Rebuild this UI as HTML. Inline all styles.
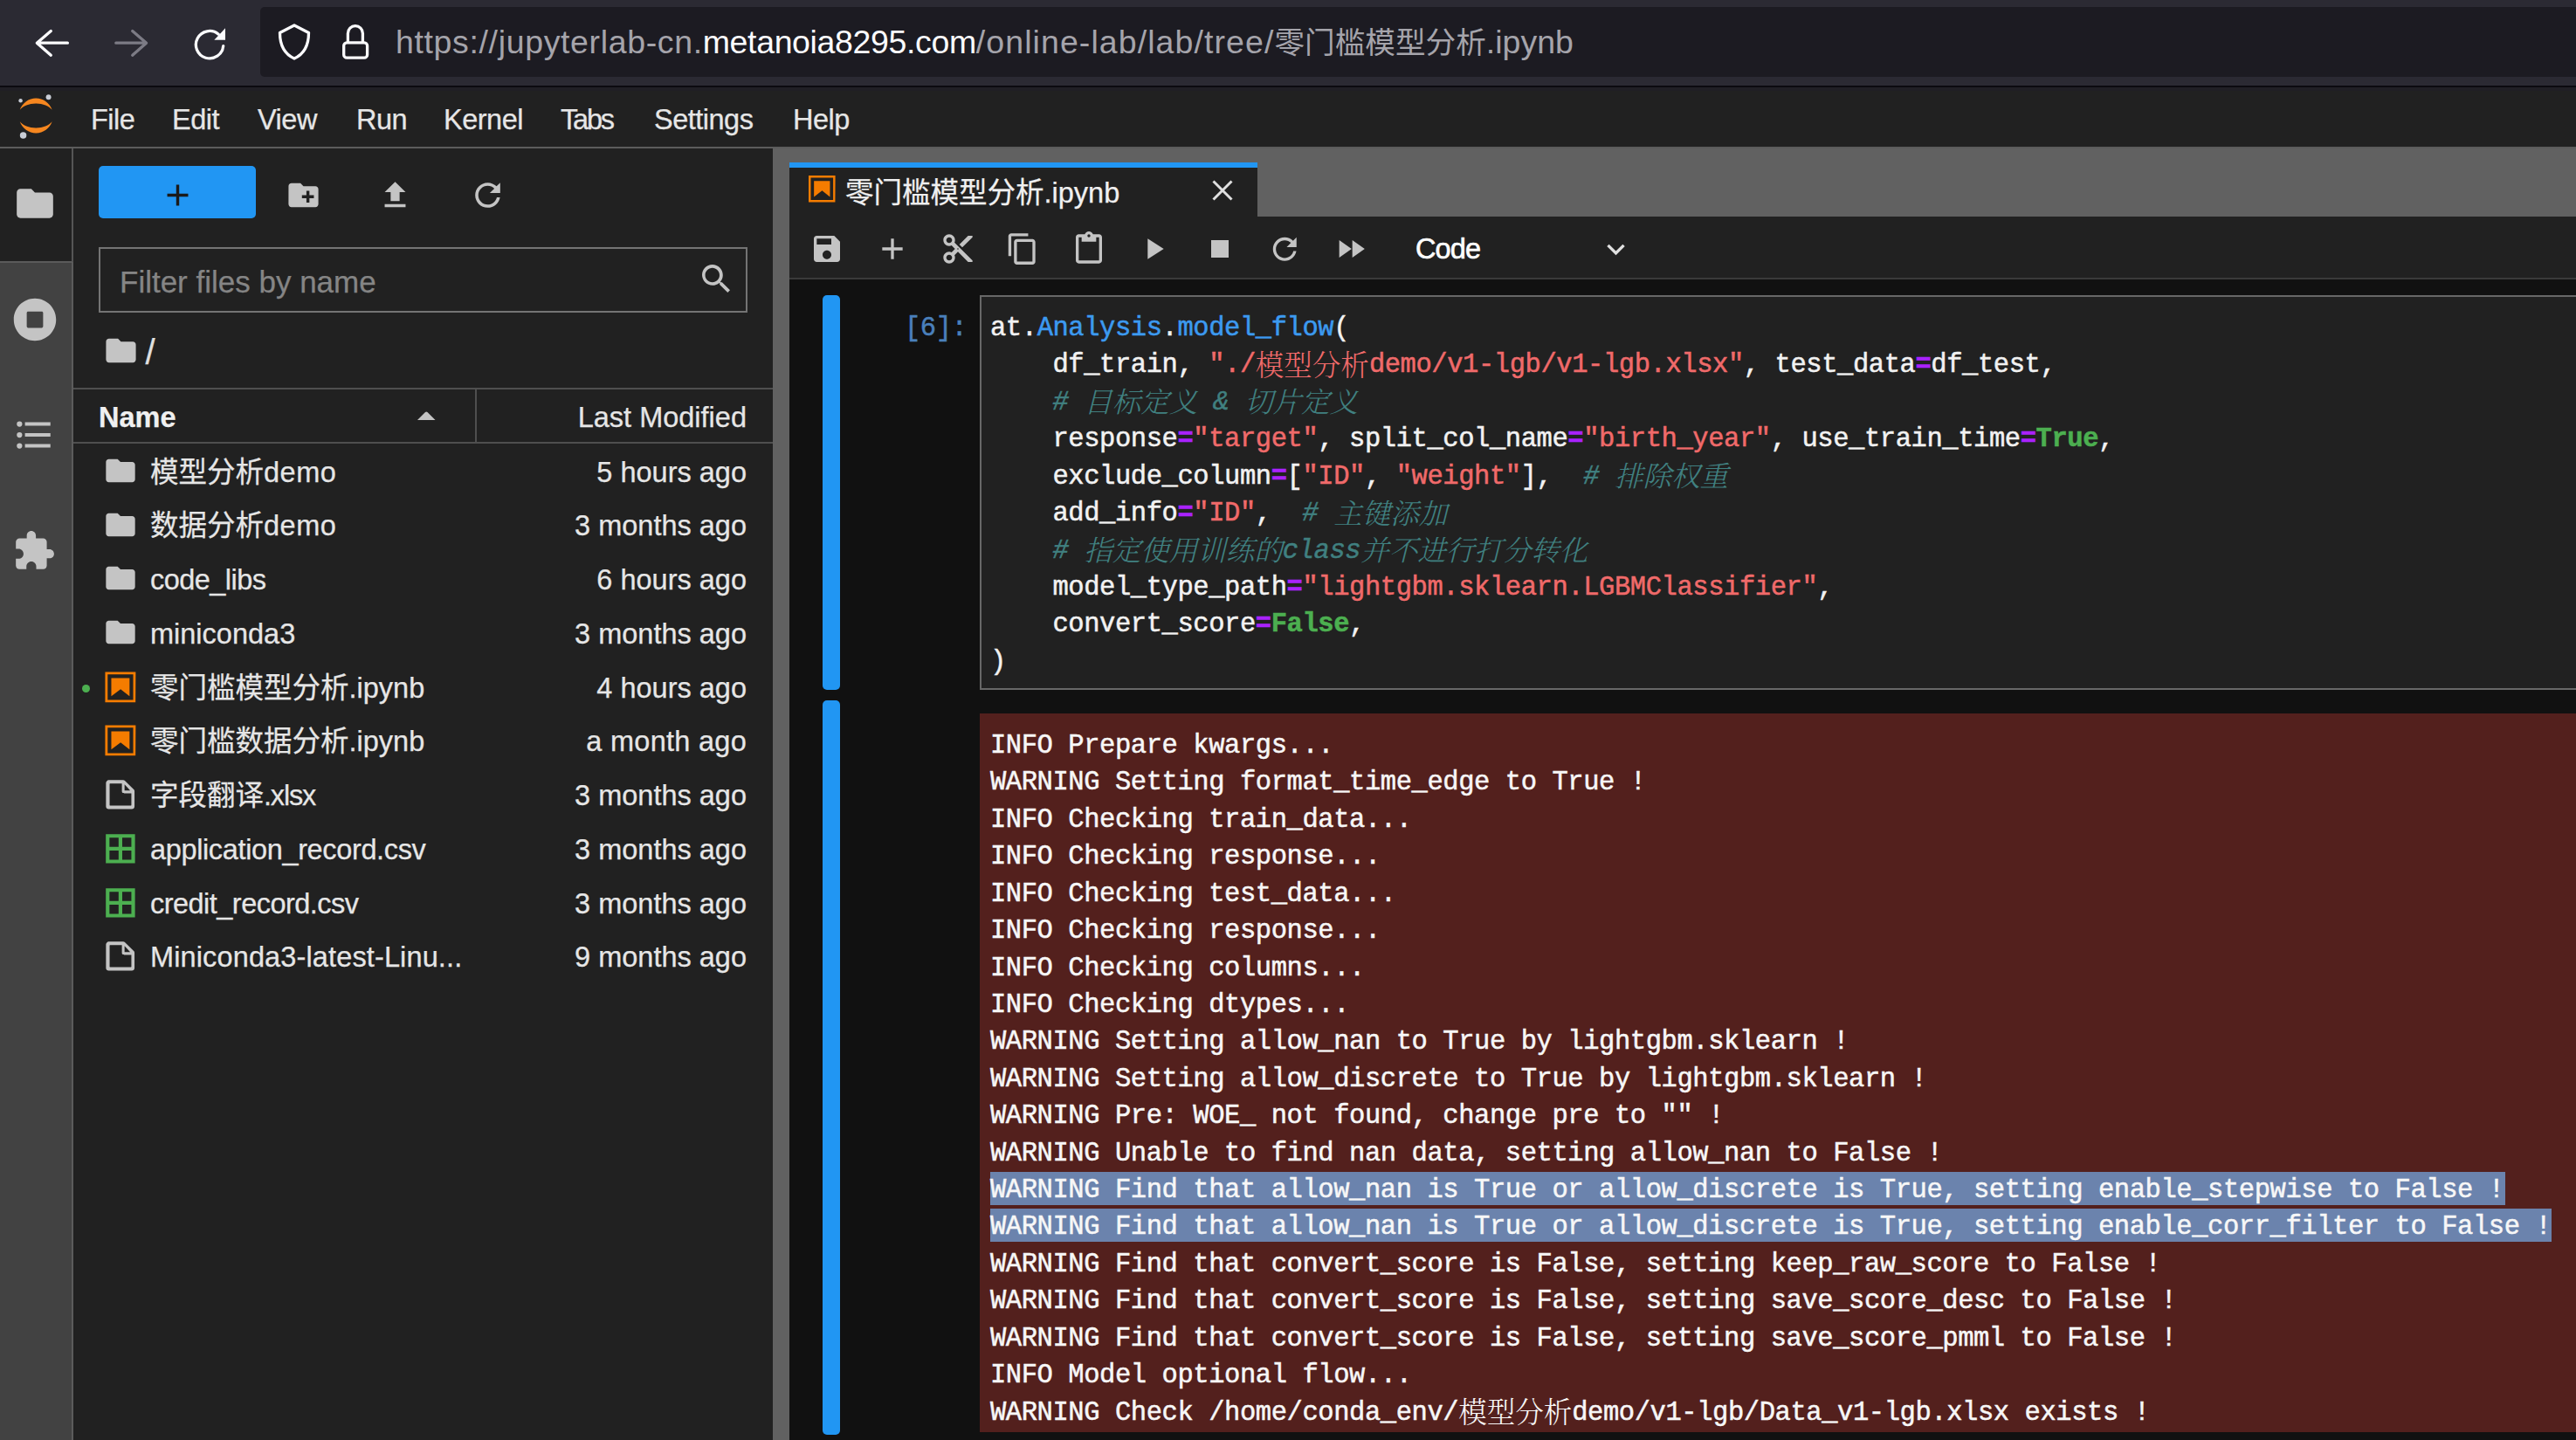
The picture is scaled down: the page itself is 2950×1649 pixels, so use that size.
<!DOCTYPE html>
<html lang="zh">
<head>
<meta charset="utf-8">
<title>JupyterLab</title>
<style>
*{box-sizing:border-box;margin:0;padding:0}
html,body{width:2950px;height:1649px;overflow:hidden;background:#111111}
body{position:relative;-webkit-text-stroke:0.25px currentColor;font-family:"Liberation Sans","Noto Sans CJK SC",sans-serif;color:#e0e0e0;font-size:32px}
.abs{position:absolute}
svg{display:block;position:absolute}
/* browser chrome */
#chrome{left:0;top:0;width:2950px;height:98px;background:#2b2a33}
#urlbar{left:298px;top:8px;width:2700px;height:80px;background:#1c1b22;border-radius:5px}
#url{left:453px;top:24.5px;font-size:37.5px;line-height:46px;color:#a5a4ab;white-space:nowrap;-webkit-text-stroke:0}
.uz{font-size:34.64px}
#url b{font-weight:400;color:#fbfbfe}
#chromeline{left:0;top:98px;width:2950px;height:2px;background:#0b0a10}
/* menu bar */
#menubar{left:0;top:100px;width:2950px;height:68px;background:#212121;border-top:4px solid #201f25}
#menuline{left:0;top:168px;width:2950px;height:2px;background:#5c5c5c}
.menu{top:115px;font-size:32.5px;line-height:44px;color:#e6e6e6;white-space:nowrap;letter-spacing:-0.5px}
/* left sidebar */
#sidebar{left:0;top:170px;width:82px;height:1479px;background:#424242}
#sideactive{left:0;top:170px;width:84px;height:130px;background:#212121}
#sideline{left:82px;top:300px;width:2px;height:1349px;background:#5c5c5c}
/* file browser */
#fb{left:84px;top:170px;width:801px;height:1479px;background:#212121}
#newbtn{left:113px;top:190px;width:180px;height:60px;background:#2196f3;border-radius:5px}
#filter{left:113px;top:283px;width:743px;height:75px;border:2.5px solid #747474;background:#212121}
#filtertxt{left:137px;top:300px;font-size:35px;line-height:46px;color:#858585;white-space:nowrap}
#crumb{left:166.5px;top:380.5px;font-size:40px;line-height:44px;color:#e0e0e0}
.hline{height:2px;background:#4f4f4f}
#hdrName{left:113px;top:455px;font-size:32.5px;line-height:46px;color:#f0f0f0;font-weight:700}
#hdrMod{right:2095px;top:455px;font-size:32.5px;line-height:46px;color:#e6e6e6;white-space:nowrap}
.row{left:84px;width:801px;height:62px}
.row .nm{position:absolute;left:88px;top:8px;font-size:32.5px;line-height:46px;color:#e6e6e6;white-space:nowrap}
.row .md{position:absolute;right:30px;top:8px;font-size:32.5px;line-height:46px;color:#e6e6e6;white-space:nowrap}
/* main */
#dock{left:885px;top:170px;width:2065px;height:1479px;background:#616161}
#tab{left:904px;top:186px;width:536px;height:62px;background:#212121;border-top:6px solid #2196f3}
#tabtxt{left:968px;top:198px;font-size:32.5px;line-height:46px;color:#f0f0f0;white-space:nowrap}
#toolbar{left:904px;top:248px;width:2046px;height:70px;background:#212121}
#toolline{left:904px;top:318px;width:2046px;height:2px;background:#3a3a3a}
#nb{left:904px;top:320px;width:2046px;height:1329px;background:#111111}
.coll{left:942px;width:20px;background:#2196f3;border-radius:5px}
#editor{left:1122px;top:338px;width:1900px;height:452px;background:#212121;border:2px solid #676767}
#output{left:1122px;top:817px;width:1900px;height:823px;background:#53201d}
pre{position:absolute;font-family:"Liberation Mono","Noto Serif CJK SC",monospace;font-size:30.5px;letter-spacing:-0.43px;line-height:42.42px;color:#f2f2f2;white-space:pre;-webkit-text-stroke:0.5px currentColor}
#prompt{left:1036px;top:355px;color:#4a80bb}
#code{left:1134px;top:355px}
#out{left:1134px;top:833px;color:#f7f7f7}
.z{font-size:32.5px;letter-spacing:0;line-height:0;-webkit-text-stroke:0;font-weight:300;position:relative;top:3.5px}
.selb{left:1134px;height:38px;background:#6b83ad}
.k{color:#3c9af0}.s{color:#f06a6a}.c{color:#408080;font-style:italic}.o{color:#aa22ff;font-weight:700}.b{color:#4caf50;font-weight:700}
#celltype{left:1621px;top:262px;font-size:32.5px;line-height:46px;color:#fff;letter-spacing:-0.9px;-webkit-text-stroke:0.6px #fff}
</style>
</head>
<body>
<!-- browser chrome -->
<div class="abs" id="chrome"></div>
<div class="abs" id="urlbar"></div>
<div class="abs" id="url"><span style="letter-spacing:0.64px">https://jupyterlab-cn.</span><b style="letter-spacing:-0.37px">metanoia8295.com</b><span style="letter-spacing:1.08px">/online-lab/lab/tree/</span><span class="uz">零门槛模型分析</span>.ipynb</div>
<div class="abs" id="chromeline"></div>
<!-- menu -->
<div class="abs" id="menubar"></div>
<div class="abs" id="menuline"></div>
<div class="abs menu" style="left:104px">File</div>
<div class="abs menu" style="left:197px">Edit</div>
<div class="abs menu" style="left:295px">View</div>
<div class="abs menu" style="left:408px">Run</div>
<div class="abs menu" style="left:508px">Kernel</div>
<div class="abs menu" style="left:642px;letter-spacing:-2.2px">Tabs</div>
<div class="abs menu" style="left:749px">Settings</div>
<div class="abs menu" style="left:908px">Help</div>
<!-- sidebar -->
<div class="abs" id="sidebar"></div>
<div class="abs" id="sideline"></div>
<div class="abs" id="sideactive"></div>
<div class="abs" style="left:82px;top:170px;width:2px;height:130px;background:#555"></div>
<div class="abs" style="left:0;top:299px;width:82px;height:2px;background:#5a5a5a"></div>
<!-- file browser -->
<div class="abs" id="fb"></div>
<div class="abs" id="newbtn"></div>
<div class="abs" id="filter"></div>
<div class="abs" id="filtertxt">Filter files by name</div>
<div class="abs" id="crumb">/</div>
<div class="abs hline" style="left:84px;top:444px;width:801px"></div>
<div class="abs hline" style="left:84px;top:506px;width:801px"></div>
<div class="abs" style="left:544px;top:446px;width:2px;height:60px;background:#4f4f4f"></div>
<div class="abs" id="hdrName">Name</div>
<div class="abs" id="hdrMod">Last Modified</div>
<div class="abs row" style="top:509.60px"><span class="nm">模型分析<span style="letter-spacing:0.5px">demo</span></span><span class="md">5 hours ago</span></div>
<div class="abs row" style="top:571.35px"><span class="nm">数据分析<span style="letter-spacing:0.5px">demo</span></span><span class="md">3 months ago</span></div>
<div class="abs row" style="top:633.10px"><span class="nm" style="letter-spacing:-0.55px">code_libs</span><span class="md">6 hours ago</span></div>
<div class="abs row" style="top:694.85px"><span class="nm">miniconda3</span><span class="md">3 months ago</span></div>
<div class="abs row" style="top:756.60px"><span class="nm">零门槛模型分析.ipynb</span><span class="md">4 hours ago</span></div>
<div class="abs row" style="top:818.35px"><span class="nm">零门槛数据分析.ipynb</span><span class="md" style="letter-spacing:0.27px">a month ago</span></div>
<div class="abs row" style="top:880.10px"><span class="nm">字段翻译<span style="letter-spacing:-1.2px">.xlsx</span></span><span class="md">3 months ago</span></div>
<div class="abs row" style="top:941.85px"><span class="nm" style="letter-spacing:-0.36px">application_record.csv</span><span class="md">3 months ago</span></div>
<div class="abs row" style="top:1003.60px"><span class="nm" style="letter-spacing:-0.53px">credit_record.csv</span><span class="md">3 months ago</span></div>
<div class="abs row" style="top:1065.35px"><span class="nm" style="letter-spacing:0.13px">Miniconda3-latest-Linu...</span><span class="md">9 months ago</span></div>
<!--ROWSEND-->
<!-- main -->
<div class="abs" id="dock"></div>
<div class="abs" id="tab"></div>
<div class="abs" id="tabtxt">零门槛模型分析.ipynb</div>
<div class="abs" id="toolbar"></div>
<div class="abs" id="toolline"></div>
<div class="abs" id="nb"></div>
<div class="abs coll" style="top:338px;height:452px"></div>
<div class="abs coll" style="top:802px;height:841px"></div>
<div class="abs" id="editor"></div>
<div class="abs" id="output"></div>
<div class="abs selb" style="top:1341.8px;width:1734.5px"></div>
<div class="abs selb" style="top:1384.2px;width:1788px"></div>
<pre id="prompt">[6]:</pre>
<pre id="code">at.<span class="k">Analysis</span>.<span class="k">model_flow</span>(
    df_train, <span class="s">"./<span class="z">模型分析</span>demo/v1-lgb/v1-lgb.xlsx"</span>, test_data<span class="o">=</span>df_test,
    <span class="c"># <span class="z">目标定义</span> &amp; <span class="z">切片定义</span></span>
    response<span class="o">=</span><span class="s">"target"</span>, split_col_name<span class="o">=</span><span class="s">"birth_year"</span>, use_train_time<span class="o">=</span><span class="b">True</span>,
    exclude_column<span class="o">=</span>[<span class="s">"ID"</span>, <span class="s">"weight"</span>],  <span class="c"># <span class="z">排除权重</span></span>
    add_info<span class="o">=</span><span class="s">"ID"</span>,  <span class="c"># <span class="z">主键添加</span></span>
    <span class="c"># <span class="z">指定使用训练的</span>class<span class="z">并不进行打分转化</span></span>
    model_type_path<span class="o">=</span><span class="s">"lightgbm.sklearn.LGBMClassifier"</span>,
    convert_score<span class="o">=</span><span class="b">False</span>,
)</pre>
<pre id="out">INFO Prepare kwargs...
WARNING Setting format_time_edge to True !
INFO Checking train_data...
INFO Checking response...
INFO Checking test_data...
INFO Checking response...
INFO Checking columns...
INFO Checking dtypes...
WARNING Setting allow_nan to True by lightgbm.sklearn !
WARNING Setting allow_discrete to True by lightgbm.sklearn !
WARNING Pre: WOE_ not found, change pre to "" !
WARNING Unable to find nan data, setting allow_nan to False !
WARNING Find that allow_nan is True or allow_discrete is True, setting enable_stepwise to False !
WARNING Find that allow_nan is True or allow_discrete is True, setting enable_corr_filter to False !
WARNING Find that convert_score is False, setting keep_raw_score to False !
WARNING Find that convert_score is False, setting save_score_desc to False !
WARNING Find that convert_score is False, setting save_score_pmml to False !
INFO Model optional flow...
WARNING Check /home/conda_env/<span class="z">模型分析</span>demo/v1-lgb/Data_v1-lgb.xlsx exists !</pre>

<svg style="left:0px;top:0px" width="460" height="98" viewBox="0 0 460 98" ><g fill="none" stroke="#fbfbfe" stroke-width="3.3" stroke-linecap="round" stroke-linejoin="round"><path d="M77.4 49.2H42.5M58.3 35.6L42.3 49.2L58.3 63.2"/><path d="M132.8 49.2H167.4M151.7 35.6L167.6 49.2L151.7 63.2" stroke="#7c7b85"/><path d="M250.2 39.2A15.7 15.7 0 1 0 255.7 52.6"/><path d="M337 29L320.5 37.5C320.5 52 326 62 337 67C348 62 353.5 52 353.5 37.5Z"/><rect x="393.7" y="48.8" width="26.9" height="17.4" rx="3.5"/><path d="M398.4 48V38.2A8.5 8.5 0 0 1 415.4 38.2V48"/></g><path d="M258 32.3V45.8H245.3Z" fill="#fbfbfe"/></svg>
<svg style="left:21px;top:108px" width="39.4" height="51.5" viewBox="0 0 39 51"><g transform="translate(-1638 -2281)"><g fill="#f5861f"><path transform="translate(1639.74 2311.98)" d="M 18.2646 7.13411C 10.4145 7.13411 3.55872 4.2576 0 0C 1.32539 3.8204 3.79556 7.13081 7.0686 9.47303C 10.3417 11.8152 14.2557 13.0734 18.269 13.0734C 22.2823 13.0734 26.1963 11.8152 29.4694 9.47303C 32.7424 7.13081 35.2126 3.8204 36.538 0C 32.9705 4.2576 26.1148 7.13411 18.2646 7.13411Z"/><path transform="translate(1639.73 2285.48)" d="M 18.2733 5.93931C 26.1235 5.93931 32.9793 8.81583 36.538 13.0734C 35.2126 9.25303 32.7424 5.94262 29.4694 3.6004C 26.1963 1.25818 22.2823 0 18.269 0C 14.2557 0 10.3417 1.25818 7.0686 3.6004C 3.79556 5.94262 1.32539 9.25303 0 13.0734C 3.56745 8.82463 10.4232 5.93931 18.2733 5.93931Z"/></g><g fill="#c9cdd6"><circle cx="1672.25" cy="2284.27" r="2.95"/><circle cx="1643.52" cy="2327.54" r="3.72"/><circle cx="1640.54" cy="2288.26" r="2.2"/></g></g></svg>
<svg style="left:15.3px;top:207.7px" width="50" height="50" viewBox="0 0 24 24" ><path d="M10 4H4c-1.1 0-1.99.9-1.99 2L2 18c0 1.1.9 2 2 2h16c1.1 0 2-.9 2-2V8c0-1.1-.9-2-2-2h-8l-2-2z" fill="#c4c4c4"/></svg>
<svg style="left:14.6px;top:340.9px" width="50" height="50" viewBox="0 0 512 512" ><path d="M256 8C119 8 8 119 8 256s111 248 248 248 248-111 248-248S393 8 256 8zm96 328c0 8.8-7.2 16-16 16H176c-8.8 0-16-7.2-16-16V176c0-8.8 7.2-16 16-16h160c8.8 0 16 7.2 16 16v160z" fill="#c4c4c4"/></svg>
<svg style="left:14.3px;top:473px" width="50" height="50" viewBox="0 0 24 24" ><path d="M7,5H21V7H7V5M7,13V11H21V13H7M4,4.5A1.5,1.5 0 0,1 5.5,6A1.5,1.5 0 0,1 4,7.5A1.5,1.5 0 0,1 2.5,6A1.5,1.5 0 0,1 4,4.5M4,10.5A1.5,1.5 0 0,1 5.5,12A1.5,1.5 0 0,1 4,13.5A1.5,1.5 0 0,1 2.5,12A1.5,1.5 0 0,1 4,10.5M7,19V17H21V19H7M4,16.5A1.5,1.5 0 0,1 5.5,18A1.5,1.5 0 0,1 4,19.5A1.5,1.5 0 0,1 2.5,18A1.5,1.5 0 0,1 4,16.5Z" fill="#c4c4c4"/></svg>
<svg style="left:14.3px;top:605.5px" width="50" height="50" viewBox="0 0 24 24" ><path d="M20.5 11H19V7c0-1.1-.9-2-2-2h-4V3.5C13 2.12 11.88 1 10.5 1S8 2.12 8 3.5V5H4c-1.1 0-1.99.9-1.99 2v3.8H3.5c1.49 0 2.7 1.21 2.7 2.7s-1.21 2.7-2.7 2.7H2V20c0 1.1.9 2 2 2h3.8v-1.5c0-1.49 1.21-2.7 2.7-2.7 1.49 0 2.7 1.21 2.7 2.7V22H17c1.1 0 2-.9 2-2v-4h1.5c1.38 0 2.5-1.12 2.5-2.5S21.88 11 20.5 11z" fill="#c4c4c4"/></svg>
<svg style="left:182.5px;top:202.5px" width="41" height="41" viewBox="0 0 24 24" ><path d="M19 13h-6v6h-2v-6H5v-2h6V5h2v6h6v2z" fill="#1a1a1a"/></svg>
<svg style="left:327.4px;top:202.8px" width="41" height="41" viewBox="0 0 24 24" ><path d="M20 6h-8l-2-2H4c-1.11 0-1.99.89-1.99 2L2 18c0 1.11.89 2 2 2h16c1.11 0 2-.89 2-2V8c0-1.11-.89-2-2-2zm-1 8h-3v3h-2v-3h-3v-2h3V9h2v3h3v2z" fill="#c4c4c4"/></svg>
<svg style="left:432.4px;top:203.2px" width="41" height="41" viewBox="0 0 24 24" ><path d="M9 16h6v-6h4l-7-7-7 7h4zm-4 2h14v2H5z" fill="#c4c4c4"/></svg>
<svg style="left:537.3px;top:201.6px" width="43" height="43" viewBox="0 0 18 18" ><path d="M9 13.5c-2.49 0-4.5-2.01-4.5-4.5S6.51 4.5 9 4.5c1.24 0 2.36.52 3.17 1.33L10 8h5V3l-1.76 1.76C12.15 3.68 10.66 3 9 3 5.69 3 3.01 5.69 3.01 9S5.69 15 9 15c2.97 0 5.43-2.16 5.9-5h-1.52c-.46 2-2.24 3.5-4.38 3.5z" fill="#c4c4c4"/></svg>
<svg style="left:800.4px;top:298.9px" width="40" height="40" viewBox="0 0 18 18" ><path d="M12.1,10.9h-0.7l-0.2-0.2c0.8-0.9,1.3-2.2,1.3-3.5c0-3-2.4-5.4-5.4-5.4S1.8,4.2,1.8,7.1s2.4,5.4,5.4,5.4 c1.3,0,2.5-0.5,3.5-1.3l0.2,0.2v0.7l4.1,4.1l1.2-1.2L12.1,10.9z M7.1,10.9c-2.1,0-3.7-1.7-3.7-3.7s1.7-3.7,3.7-3.7s3.7,1.7,3.7,3.7 S9.2,10.9,7.1,10.9z" fill="#c4c4c4"/></svg>
<svg style="left:117.6px;top:380.8px" width="41" height="41" viewBox="0 0 24 24" ><path d="M10 4H4c-1.1 0-1.99.9-1.99 2L2 18c0 1.1.9 2 2 2h16c1.1 0 2-.9 2-2V8c0-1.1-.9-2-2-2h-8l-2-2z" fill="#c4c4c4"/></svg>
<svg style="left:478.4px;top:470.7px" width="20.5" height="10" viewBox="0 0 20.5 10"><path d="M0 10L9 1Q10.25 0 11.5 1L20.5 10Z" fill="#c4c4c4"/></svg>
<svg style="left:117.6px;top:518.90px" width="40" height="40" viewBox="0 0 24 24" ><path d="M10 4H4c-1.1 0-1.99.9-1.99 2L2 18c0 1.1.9 2 2 2h16c1.1 0 2-.9 2-2V8c0-1.1-.9-2-2-2h-8l-2-2z" fill="#c4c4c4"/></svg>
<svg style="left:117.6px;top:580.65px" width="40" height="40" viewBox="0 0 24 24" ><path d="M10 4H4c-1.1 0-1.99.9-1.99 2L2 18c0 1.1.9 2 2 2h16c1.1 0 2-.9 2-2V8c0-1.1-.9-2-2-2h-8l-2-2z" fill="#c4c4c4"/></svg>
<svg style="left:117.6px;top:642.40px" width="40" height="40" viewBox="0 0 24 24" ><path d="M10 4H4c-1.1 0-1.99.9-1.99 2L2 18c0 1.1.9 2 2 2h16c1.1 0 2-.9 2-2V8c0-1.1-.9-2-2-2h-8l-2-2z" fill="#c4c4c4"/></svg>
<svg style="left:117.6px;top:704.15px" width="40" height="40" viewBox="0 0 24 24" ><path d="M10 4H4c-1.1 0-1.99.9-1.99 2L2 18c0 1.1.9 2 2 2h16c1.1 0 2-.9 2-2V8c0-1.1-.9-2-2-2h-8l-2-2z" fill="#c4c4c4"/></svg>
<svg style="left:117.2px;top:765.6px" width="41.8" height="41.8" viewBox="0 0 22 22" ><g fill="#f57c00"><path d="M18.7 3.3v15.4H3.3V3.3h15.4m1.5-1.5H1.8v18.3h18.3l.1-18.3z"/><path d="M16.5 16.5l-5.4-4.3-5.6 4.3v-11h11z"/></g></svg>
<svg style="left:117.2px;top:827.35px" width="41.8" height="41.8" viewBox="0 0 22 22" ><g fill="#f57c00"><path d="M18.7 3.3v15.4H3.3V3.3h15.4m1.5-1.5H1.8v18.3h18.3l.1-18.3z"/><path d="M16.5 16.5l-5.4-4.3-5.6 4.3v-11h11z"/></g></svg>
<svg style="left:117.2px;top:889.1px" width="41.8" height="41.8" viewBox="0 0 22 22" ><path d="M19.3 8.2l-5.5-5.5c-.3-.3-.7-.5-1.2-.5H3.9c-.8.1-1.6.9-1.6 1.8v14.1c0 .9.7 1.6 1.6 1.6h14c.9 0 1.6-.7 1.6-1.6V9.4c.1-.5-.1-.9-.2-1.2zm-5.8-3.3l3.4 3.6h-3.4V4.9zm3.9 12.7H4.7c-.1 0-.2 0-.2-.2V4.7c0-.2.1-.3.2-.3h7.2v4.4s0 .8.3 1.1c.3.3 1.1.3 1.1.3h4.3v7.2s-.1.2-.2.2z" fill="#c4c4c4"/></svg>
<svg style="left:117.2px;top:950.85px" width="41.8" height="41.8" viewBox="0 0 22 22" ><path d="M2.2 2.2v17.6h17.6V2.2H2.2zm15.4 7.7h-5.5V4.4h5.5v5.5zM9.9 4.4v5.5H4.4V4.4h5.5zm-5.5 7.7h5.5v5.5H4.4v-5.5zm7.7 5.5v-5.5h5.5v5.5h-5.5z" fill="#4caf50"/></svg>
<svg style="left:117.2px;top:1012.6px" width="41.8" height="41.8" viewBox="0 0 22 22" ><path d="M2.2 2.2v17.6h17.6V2.2H2.2zm15.4 7.7h-5.5V4.4h5.5v5.5zM9.9 4.4v5.5H4.4V4.4h5.5zm-5.5 7.7h5.5v5.5H4.4v-5.5zm7.7 5.5v-5.5h5.5v5.5h-5.5z" fill="#4caf50"/></svg>
<svg style="left:117.2px;top:1074.35px" width="41.8" height="41.8" viewBox="0 0 22 22" ><path d="M19.3 8.2l-5.5-5.5c-.3-.3-.7-.5-1.2-.5H3.9c-.8.1-1.6.9-1.6 1.8v14.1c0 .9.7 1.6 1.6 1.6h14c.9 0 1.6-.7 1.6-1.6V9.4c.1-.5-.1-.9-.2-1.2zm-5.8-3.3l3.4 3.6h-3.4V4.9zm3.9 12.7H4.7c-.1 0-.2 0-.2-.2V4.7c0-.2.1-.3.2-.3h7.2v4.4s0 .8.3 1.1c.3.3 1.1.3 1.1.3h4.3v7.2s-.1.2-.2.2z" fill="#c4c4c4"/></svg>
<div class="abs" style="left:94.3px;top:784.2px;width:9px;height:9px;border-radius:50%;background:#4caf50"></div>
<svg style="left:922.8px;top:198.3px" width="36.6" height="36.6" viewBox="0 0 22 22" ><g fill="#f57c00"><path d="M18.7 3.3v15.4H3.3V3.3h15.4m1.5-1.5H1.8v18.3h18.3l.1-18.3z"/><path d="M16.5 16.5l-5.4-4.3-5.6 4.3v-11h11z"/></g></svg>
<svg style="left:1386px;top:204px" width="28" height="28" viewBox="0 0 28 28"><path d="M3.5 3.5L24.5 24.5M24.5 3.5L3.5 24.5" stroke="#e0e0e0" stroke-width="3" fill="none"/></svg>
<svg style="left:926.50px;top:265.30px" width="40" height="40" viewBox="0 0 24 24" ><path d="M17 3H5c-1.11 0-2 .9-2 2v14c0 1.1.89 2 2 2h14c1.1 0 2-.9 2-2V7l-4-4zm-5 16c-1.66 0-3-1.34-3-3s1.34-3 3-3 3 1.34 3 3-1.34 3-3 3zm3-10H5V5h10v4z" fill="#c4c4c4"/></svg>
<svg style="left:1002.20px;top:265.30px" width="40" height="40" viewBox="0 0 24 24" ><path d="M19 13h-6v6h-2v-6H5v-2h6V5h2v6h6v2z" fill="#c4c4c4"/></svg>
<svg style="left:1077.30px;top:265.30px" width="40" height="40" viewBox="0 0 24 24" ><path d="M9.64 7.64c.23-.5.36-1.05.36-1.64 0-2.21-1.79-4-4-4S2 3.79 2 6s1.79 4 4 4c.59 0 1.14-.13 1.64-.36L10 12l-2.36 2.36C7.14 14.13 6.59 14 6 14c-2.21 0-4 1.79-4 4s1.79 4 4 4 4-1.79 4-4c0-.59-.13-1.14-.36-1.64L12 14l7 7h3v-1L9.64 7.64zM6 8c-1.1 0-2-.89-2-2s.9-2 2-2 2 .89 2 2-.9 2-2 2zm0 12c-1.1 0-2-.89-2-2s.9-2 2-2 2 .89 2 2-.9 2-2 2zm6-7.5c-.28 0-.5-.22-.5-.5s.22-.5.5-.5.5.22.5.5-.22.5-.5.5zM19 3l-6 6 2 2 7-7V3z" fill="#c4c4c4"/></svg>
<svg style="left:1151.00px;top:265.30px" width="40" height="40" viewBox="0 0 18 18" ><path d="M11.9,1H3.2C2.4,1,1.7,1.7,1.7,2.5v10.2h1.5V2.5h8.7V1z M14.1,3.9h-8c-0.8,0-1.5,0.7-1.5,1.5v10.2c0,0.8,0.7,1.5,1.5,1.5h8 c0.8,0,1.5-0.7,1.5-1.5V5.4C15.5,4.6,14.9,3.9,14.1,3.9z M14.1,15.5h-8V5.4h8V15.5z" fill="#c4c4c4"/></svg>
<svg style="left:1226.70px;top:265.30px" width="40" height="40" viewBox="0 0 24 24" ><path d="M19 2h-4.18C14.4.84 13.3 0 12 0c-1.3 0-2.4.84-2.82 2H5c-1.1 0-2 .9-2 2v16c0 1.1.9 2 2 2h14c1.1 0 2-.9 2-2V4c0-1.1-.9-2-2-2zm-7 0c.55 0 1 .45 1 1s-.45 1-1 1-1-.45-1-1 .45-1 1-1zm7 18H5V4h2v3h10V4h2v16z" fill="#c4c4c4"/></svg>
<svg style="left:1301.40px;top:265.30px" width="40" height="40" viewBox="0 0 24 24" ><path d="M8 5v14l11-7z" fill="#c4c4c4"/></svg>
<svg style="left:1377.00px;top:265.30px" width="40" height="40" viewBox="0 0 24 24" ><path d="M6 6h12v12H6z" fill="#c4c4c4"/></svg>
<svg style="left:1451.25px;top:265.05px" width="40.5" height="40.5" viewBox="0 0 18 18" ><path d="M9 13.5c-2.49 0-4.5-2.01-4.5-4.5S6.51 4.5 9 4.5c1.24 0 2.36.52 3.17 1.33L10 8h5V3l-1.76 1.76C12.15 3.68 10.66 3 9 3 5.69 3 3.01 5.69 3.01 9S5.69 15 9 15c2.97 0 5.43-2.16 5.9-5h-1.52c-.46 2-2.24 3.5-4.38 3.5z" fill="#c4c4c4"/></svg>
<svg style="left:1527.00px;top:265.30px" width="40" height="40" viewBox="0 0 24 24" ><path d="M4 18l8.5-6L4 6v12zm9-12v12l8.5-6L13 6z" fill="#c4c4c4"/></svg>
<svg style="left:1829.5px;top:264.5px" width="41" height="41" viewBox="0 0 24 24" ><path d="M7.41 8.59L12 13.17l4.59-4.58L18 10l-6 6-6-6 1.41-1.41z" fill="#e0e0e0"/></svg>
<div class="abs" id="celltype">Code</div>
<!--ICONSEND-->
</body>
</html>
